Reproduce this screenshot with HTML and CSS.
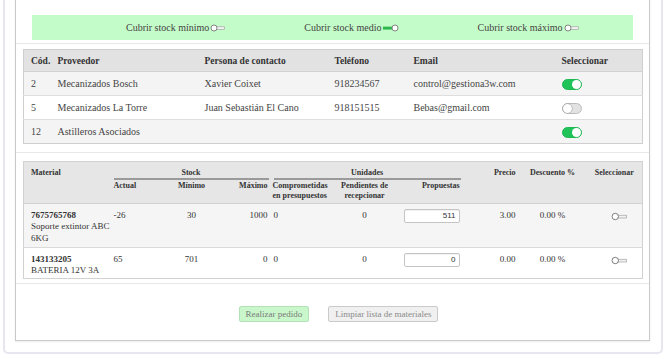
FILE: index.html
```html
<!DOCTYPE html>
<html lang="es">
<head>
<meta charset="utf-8">
<link rel="stylesheet" href="styles.css">
</head>
<body>
<div class="outer">
  <div class="panel">
    <section class="sec sec-band">
      <div class="band">
        <span class="opt">Cubrir stock mínimo <svg class="mini" width="15" height="8" viewBox="0 0 15 8"><rect x="6.5" y="2.8" width="8" height="2.6" fill="#f2f2f2" stroke="#999" stroke-width="0.6"/><circle cx="4" cy="4" r="3" fill="#fff" stroke="#777" stroke-width="0.9"/></svg></span>
        <span class="opt">Cubrir stock medio <svg class="mini" width="16" height="8" viewBox="0 0 16 8"><rect x="0" y="2.6" width="10" height="3" fill="#2fb84f"/><circle cx="12" cy="4" r="3" fill="#fff" stroke="#777" stroke-width="0.9"/></svg></span>
        <span class="opt">Cubrir stock máximo <svg class="mini" width="15" height="8" viewBox="0 0 15 8"><rect x="6.5" y="2.8" width="8" height="2.6" fill="#f2f2f2" stroke="#999" stroke-width="0.6"/><circle cx="4" cy="4" r="3" fill="#fff" stroke="#777" stroke-width="0.9"/></svg></span>
      </div>
    </section>

    <section class="sec sec-prov">
      <table class="t1">
        <colgroup><col class="c-cod"><col class="c-prov"><col class="c-pers"><col class="c-tel"><col class="c-mail"><col class="c-sel"></colgroup>
        <thead>
          <tr><th>Cód.</th><th>Proveedor</th><th>Persona de contacto</th><th>Teléfono</th><th>Email</th><th>Seleccionar</th></tr>
        </thead>
        <tbody>
          <tr class="alt"><td>2</td><td>Mecanizados Bosch</td><td>Xavier Coixet</td><td>918234567</td><td>control@gestiona3w.com</td><td><span class="sw on"></span></td></tr>
          <tr><td>5</td><td>Mecanizados La Torre</td><td>Juan Sebastián El Cano</td><td>918151515</td><td>Bebas@gmail.com</td><td><span class="sw"></span></td></tr>
          <tr class="alt"><td>12</td><td>Astilleros Asociados</td><td></td><td></td><td></td><td><span class="sw on"></span></td></tr>
        </tbody>
      </table>
    </section>

    <section class="sec sec-mat">
      <table class="t2">
        <colgroup><col class="m-mat"><col class="m-act"><col class="m-min"><col class="m-max"><col class="m-comp"><col class="m-pend"><col class="m-prop"><col class="m-prec"><col class="m-desc"><col class="m-sel"></colgroup>
        <thead>
          <tr class="h1">
            <th rowspan="2" class="l">Material</th>
            <th colspan="3" class="grp"><div class="gl">Stock</div></th>
            <th colspan="3" class="grp"><div class="gl">Unidades</div></th>
            <th rowspan="2" class="r">Precio</th>
            <th rowspan="2" class="c">Descuento %</th>
            <th rowspan="2" class="c">Seleccionar</th>
          </tr>
          <tr class="h2">
            <th class="l">Actual</th>
            <th class="c">Mínimo</th>
            <th class="r">Máximo</th>
            <th class="l comp">Comprometidas<br>en presupuestos</th>
            <th class="c">Pendientes de<br>recepcionar</th>
            <th class="r">Propuestas</th>
          </tr>
        </thead>
        <tbody>
          <tr class="alt r1">
            <td class="l"><b>7675765768</b><br>Soporte extintor ABC<br>6KG</td>
            <td class="l">-26</td>
            <td class="c">30</td>
            <td class="r">1000</td>
            <td class="l">0</td>
            <td class="c">0</td>
            <td class="r"><input class="qty" type="text" value="511"></td>
            <td class="r">3.00</td>
            <td class="c">0.00 %</td>
            <td class="c sel"><svg class="mini" width="16" height="9" viewBox="0 0 15 8"><rect x="6.5" y="2.8" width="8" height="2.6" fill="#f2f2f2" stroke="#999" stroke-width="0.6"/><circle cx="4" cy="4" r="3" fill="#fff" stroke="#777" stroke-width="0.9"/></svg></td>
          </tr>
          <tr class="r2">
            <td class="l"><b>143133205</b><br>BATERIA 12V 3A</td>
            <td class="l">65</td>
            <td class="c">701</td>
            <td class="r">0</td>
            <td class="l">0</td>
            <td class="c">0</td>
            <td class="r"><input class="qty" type="text" value="0"></td>
            <td class="r">0.00</td>
            <td class="c">0.00 %</td>
            <td class="c sel"><svg class="mini" width="16" height="9" viewBox="0 0 15 8"><rect x="6.5" y="2.8" width="8" height="2.6" fill="#f2f2f2" stroke="#999" stroke-width="0.6"/><circle cx="4" cy="4" r="3" fill="#fff" stroke="#777" stroke-width="0.9"/></svg></td>
          </tr>
        </tbody>
      </table>
    </section>

    <section class="sec sec-btn">
      <button class="btn btn-go" type="button">Realizar pedido</button>
      <button class="btn btn-clear" type="button">Limpiar lista de materiales</button>
    </section>
  </div>
</div>
</body>
</html>
```

FILE: styles.css
```css
* { box-sizing: border-box; }
html, body { margin: 0; padding: 0; background: #fff; }
body {
  font-family: "Liberation Serif", "Times New Roman", serif;
  color: #3a3a3a;
  width: 670px;
  height: 359px;
  overflow: hidden;
}
.outer {
  margin-left: 3px;
  width: 660px;
  border: 2px solid #e6e6ef;
  border-top: 0;
  border-radius: 0 0 5px 5px;
  padding: 0 11px 11px 10px;
}
.panel {
  border: 1px solid #cacaca;
  border-top: 0;
  box-shadow: 0 1px 2px rgba(0,0,0,0.08);
  background: #fff;
}
.sec { border-bottom: 1px solid #e8e8e8; }
.sec-band { padding: 15px 16px 3px 16px; }
.band {
  background: #c4fcc9;
  height: 25px;
  display: flex;
  align-items: center;
  padding-left: 94px;
  gap: 79px;
  font-size: 10px;
  color: #444;
}
.opt { display: inline-flex; align-items: center; white-space: nowrap; }
.mini { display: inline-block; margin-left: 1px; vertical-align: middle; }

.sec-prov { padding: 5px 7px 8px 7px; }
.sec-mat { padding: 8px 7px 4px 7px; }
table { border-collapse: collapse; table-layout: fixed; width: 619px; }

.t1 { border: 1px solid #cfcfcf; font-size: 10px; }
.c-cod { width: 27px; } .c-prov { width: 147px; } .c-pers { width: 130px; }
.c-tel { width: 79px; } .c-mail { width: 148px; } .c-sel { width: 88px; }
.t1 th {
  background: #e2e2e2;
  text-align: left;
  font-weight: bold;
  color: #333;
  height: 22px;
  padding: 0 0 0 7px;
  font-size: 9.5px;
  border-bottom: 1px solid #d2d2d2;
}
.t1 td {
  height: 24px;
  padding: 0 0 0 7px;
  color: #444;
  border-top: 1px solid #dedede;
  white-space: nowrap;
  vertical-align: middle;
}
.t1 tr.alt td { background: #f4f4f4; }
.sw {
  display: inline-block;
  position: relative;
  width: 20px;
  height: 11px;
  border-radius: 6px;
  background: #e2e2e2;
  border: 1px solid #bcbcbc;
  vertical-align: middle;
}
.sw::after {
  content: "";
  position: absolute;
  top: 0;
  left: 0;
  width: 9px;
  height: 9px;
  border-radius: 50%;
  background: #fff;
  box-shadow: 0 0 0 0.5px #999;
}
.sw.on { background: #1fc35a; border-color: #1fb852; }
.sw.on::after { left: 9px; box-shadow: none; }

.t2 { border: 1px solid #d2d2d2; font-size: 9px; }
.m-mat { width: 87px; } .m-act { width: 50px; } .m-min { width: 62px; }
.m-max { width: 48px; } .m-comp { width: 60px; } .m-pend { width: 68px; }
.m-prop { width: 64px; } .m-prec { width: 56px; } .m-desc { width: 68px; }
.m-sel { width: 56px; }
.t2 thead th {
  background: #e6e6e6;
  font-size: 8px;
  font-weight: bold;
  color: #333;
  line-height: 10px;
  vertical-align: top;
  white-space: nowrap;
}
.t2 .h1 th { padding: 6px 3px 0 3px; height: 18px; }
.t2 .h1 th.l { padding-left: 7px; }
.t2 .h2 th { padding: 1px 3px 0 3px; height: 23px; }
.t2 .h2 th.comp { padding-left: 2px; padding-right: 0; }
.t2 thead { border-bottom: 1px solid #d2d2d2; }
.t2 th.grp { padding: 6px 0 0 0; }
.gl {
  text-align: center;
  border-bottom: 2px solid #9a9a9a;
  margin: 0 2px 0 3px;
  padding-bottom: 0;
}
.l { text-align: left; }
.r { text-align: right; }
.c { text-align: center; }
.t2 td {
  vertical-align: top;
  padding: 6px 3px 0 3px;
  line-height: 11.5px;
  color: #333;
  white-space: nowrap;
}
.t2 td:first-child { padding-left: 7px; }
.t2 tr.r1 td { height: 44px; background: #f5f5f5; border-bottom: 1px solid #dadada; }
.t2 tr.r2 td { height: 31px; }
.t2 td.sel { padding-top: 7px; padding-left: 12px; }
.qty {
  width: 56px;
  height: 14px;
  border: 1px solid #c4c4c4;
  border-radius: 2px;
  background: #fff;
  box-shadow: inset 0 1px 1px rgba(0,0,0,0.06);
  font-family: "Liberation Sans", Arial, sans-serif;
  font-size: 8px;
  color: #333;
  text-align: right;
  padding: 0 3px;
  margin-top: -1px;
  display: inline-block;
  vertical-align: top;
}

.sec-btn {
  border-bottom: 0;
  display: flex;
  justify-content: center;
  gap: 19px;
  padding: 22px 0 18px 12px;
}
.btn {
  font-family: "Liberation Serif", "Times New Roman", serif;
  font-size: 9px;
  height: 16px;
  padding: 0 6px;
  border-radius: 2px;
  color: #7a7a7a;
  line-height: 14px;
}
.btn-go { background: #c9f7cb; border: 1px solid #b3e3b5; }
.btn-clear { background: #f0f0f0; border: 1px solid #cacaca; color: #8a8a8a; }
```
